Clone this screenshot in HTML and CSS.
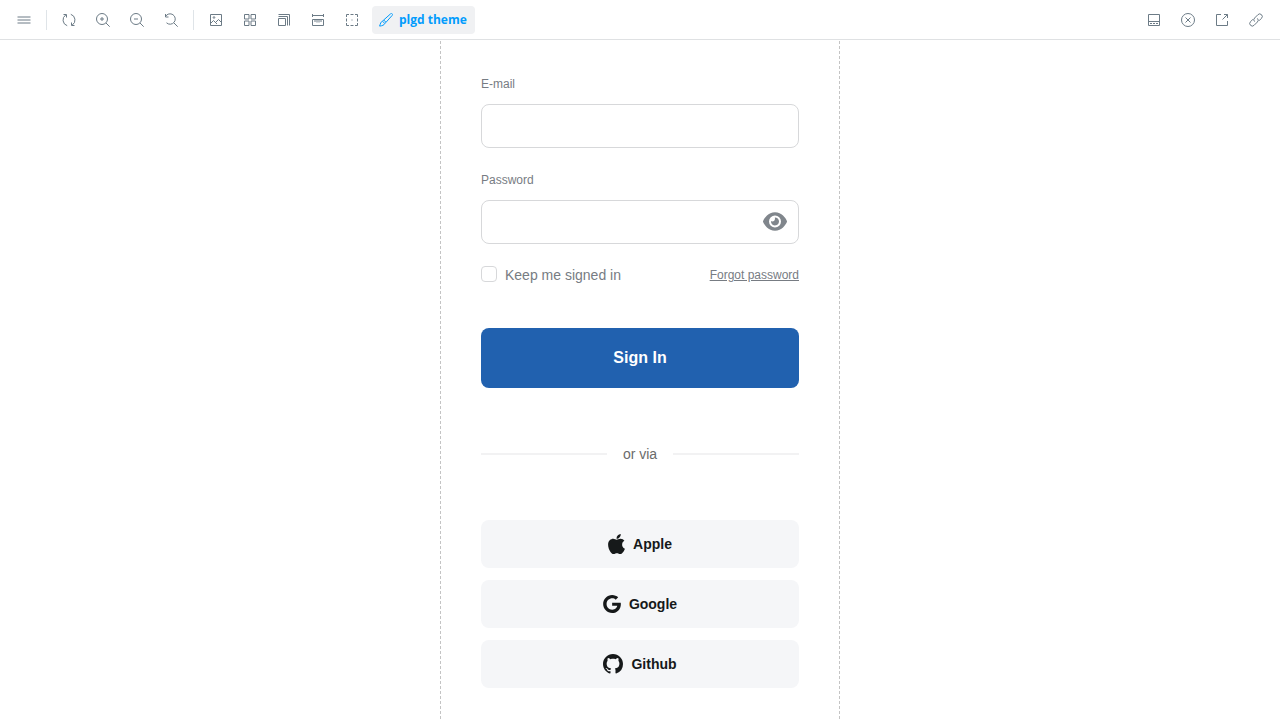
FILE: index.html
```html
<!DOCTYPE html>
<html lang="en">
<head>
<meta charset="utf-8">
<title>Sign In</title>
<link rel="stylesheet" href="styles.css">
</head>
<body>
<header class="toolbar">
  <div class="tools">
    <button class="tool" type="button" aria-label="Menu"><svg viewBox="0 0 14 14"><path d="M.5 4h13M.5 7h13M.5 10h13"/></svg></button>
    <span class="separator"></span>
    <button class="tool" type="button" aria-label="Remount"><svg viewBox="0 0 14 14"><path d="M5.200 12.700A6 6 0 0 1 3.700 2M1.500 1.500h3v3M8.800 1.300A6 6 0 0 1 10.300 12M12.500 12.500h-3v-3"/></svg></button>
    <button class="tool" type="button" aria-label="Zoom in"><svg viewBox="0 0 14 14"><circle cx="6" cy="6" r="5.5"/><path d="M6 4v4M4 6h4M10 10l3.700 3.700"/></svg></button>
    <button class="tool" type="button" aria-label="Zoom out"><svg viewBox="0 0 14 14"><circle cx="6" cy="6" r="5.5"/><path d="M4 6h4M10 10l3.700 3.700"/></svg></button>
    <button class="tool" type="button" aria-label="Reset zoom"><svg viewBox="0 0 14 14"><path d="M1.500 3.500A5.200 5.200 0 1 1 2.500 9.800M1.500 1v3h3M10 10l3.700 3.700"/></svg></button>
    <span class="separator"></span>
    <button class="tool" type="button" aria-label="Background"><svg viewBox="0 0 14 14"><path d="M1.500 1.500h11v11h-11zM1.500 10.500l3-3 2 2 3-3 3 3M6 9l2 2"/><circle cx="5" cy="4.500" r=".8"/></svg></button>
    <button class="tool" type="button" aria-label="Grid"><svg viewBox="0 0 14 14"><path d="M1.500 1.500H6V6H1.500zM8 1.500h4.500V6H8zM1.500 8H6v4.500H1.500zM8 8h4.500v4.500H8z"/></svg></button>
    <button class="tool" type="button" aria-label="Viewport"><svg viewBox="0 0 14 14"><path d="M1.500 5.500h7v7h-7zM1.500 3.500h9v9M1.500 1.500h11v11"/></svg></button>
    <button class="tool" type="button" aria-label="Measure"><svg viewBox="0 0 14 14"><path d="M1.500 1v3M12.500 1v3M1.500 2.500h11M1.500 6.500h11v6h-11zM4 7v2M6 7v2.500M8 7v2.500M10 7v2"/></svg></button>
    <button class="tool" type="button" aria-label="Outline"><svg viewBox="0 0 14 14"><path d="M1.500 4V1.500H4M10 1.500h2.500V4M12.500 10v2.500H10M4 12.500H1.500V10M5.500 1.500h3M5.500 12.500h3M1.500 5.500v3M12.500 5.500v3M6.500 7h1"/></svg></button>
    <button class="tool theme" type="button"><svg viewBox="0 0 14 14"><path d="M13.200.8c.6.6.3 1.200-.2 1.800L7 9.300 4.700 7 11.400 1c.6-.5 1.200-.8 1.800-.2zM4.700 7 3.500 8.200l2.300 2.300L7 9.300M3.500 8.200c-1.600.4-2.100 2.500-2.900 4.900 2.600-.3 4.600-1 5.200-2.600"/></svg>plgd theme</button>
  </div>
  <div class="tools">
    <button class="tool" type="button" aria-label="Show addons"><svg viewBox="0 0 14 14"><path d="M1.500 1.500h11v11h-11zM1.500 8.500h11M3 10.500h2M6 10.500h2M9 10.500h2"/></svg></button>
    <button class="tool" type="button" aria-label="Exit full screen"><svg viewBox="0 0 14 14"><circle cx="7" cy="7" r="6.500"/><path d="M4.500 4.500l5 5M9.500 4.500l-5 5"/></svg></button>
    <button class="tool" type="button" aria-label="Open in new tab"><svg viewBox="0 0 14 14"><path d="M6 1.500H1.500v11h11V8M9 1.500h3.500V5M12.500 1.500 7.500 6.500"/></svg></button>
    <button class="tool" type="button" aria-label="Copy link"><svg viewBox="0 0 14 14"><path d="M5.600 8.600a2.500 2.500 0 0 1 0-3.600l3.300-3.300a2.500 2.500 0 0 1 3.600 3.600L10 7.800M8.400 5.400a2.500 2.500 0 0 1 0 3.600l-3.300 3.300a2.500 2.500 0 0 1-3.600-3.600L4 6.200"/></svg></button>
  </div>
</header>
<main class="canvas">
  <form class="panel">
    <label class="label" for="email">E-mail</label>
    <input class="field" id="email" type="email">
    <label class="label" for="password">Password</label>
    <div class="password">
      <input class="field" id="password" type="password">
      <button class="reveal" type="button" aria-label="Show password"><svg viewBox="0 32 576 448"><path d="M288 32c-80.800 0-145.500 36.800-192.600 80.600C48.600 156 17.300 208 2.500 243.700c-3.300 7.900-3.300 16.700 0 24.600C17.300 304 48.600 356 95.400 399.400C142.500 443.200 207.200 480 288 480s145.500-36.800 192.600-80.600c46.800-43.500 78.100-95.400 93-131.100c3.300-7.900 3.300-16.700 0-24.600c-14.900-35.700-46.200-87.700-93-131.100C433.500 68.800 368.800 32 288 32zM144 256a144 144 0 1 1 288 0 144 144 0 1 1 -288 0zm144-64c0 35.300-28.700 64-64 64c-7.100 0-13.900-1.200-20.300-3.300c-5.500-1.800-11.900 1.600-11.700 7.400c.3 6.900 1.300 13.800 3.200 20.700c13.700 51.200 66.400 81.600 117.600 67.900s81.600-66.400 67.900-117.600c-11.100-41.500-47.800-69.400-88.600-71.100c-5.800-.2-9.200 6.100-7.400 11.700c2.100 6.400 3.300 13.200 3.300 20.300z"/></svg></button>
    </div>
    <div class="options">
      <input class="check" id="keep" type="checkbox">
      <label class="keep" for="keep">Keep me signed in</label>
      <a class="forgot" href="#">Forgot password</a>
    </div>
    <button class="submit" type="submit">Sign In</button>
    <div class="divider">or via</div>
    <div class="providers">
      <button class="provider" type="button"><svg width="17" height="20" viewBox="4 32 376 448"><path d="M318.700 268.700c-.2-36.700 16.400-64.400 50-84.800-18.800-26.900-47.200-41.700-84.700-44.600-35.500-2.800-74.300 20.700-88.500 20.700-15 0-49.400-19.700-76.400-19.700C63.300 141.200 4 184.800 4 273.500q0 39.300 14.400 81.200c12.800 36.700 59 126.700 107.200 125.200 25.200-.6 43-17.900 75.800-17.900 31.800 0 48.300 17.900 76.400 17.900 48.600-.7 90.400-82.500 102.600-119.300-65.200-30.700-61.700-90-61.700-91.900zm-56.600-164.200c27.300-32.400 24.800-61.900 24-72.500-24.100 1.400-52 16.400-67.900 34.900-17.500 19.800-27.800 44.300-25.600 71.900 26.100 2 49.900-11.400 69.500-34.300z"/></svg>Apple</button>
      <button class="provider" type="button"><svg width="18" height="18" viewBox="0 8 488 496"><path d="M488 261.800C488 403.300 391.100 504 248 504 110.800 504 0 393.200 0 256S110.800 8 248 8c66.800 0 123 24.500 166.300 64.900l-67.500 64.900C258.500 52.600 94.300 116.600 94.300 256c0 86.500 69.100 156.600 153.700 156.600 98.200 0 135-70.400 140.800-106.900H248v-85.300h236.100c2.300 12.700 3.900 24.900 3.900 41.400z"/></svg>Google</button>
      <button class="provider" type="button"><svg width="20" height="20" viewBox="0 0 16 16"><path d="M8 0C3.580 0 0 3.580 0 8c0 3.540 2.290 6.530 5.470 7.590.4.070.55-.17.55-.38 0-.19-.01-.82-.01-1.490-2.010.37-2.530-.49-2.690-.94-.09-.23-.48-.94-.82-1.130-.28-.15-.68-.52-.01-.53.63-.01 1.080.58 1.230.82.72 1.210 1.870.87 2.330.66.07-.52.28-.87.51-1.070-1.780-.2-3.640-.89-3.640-3.950 0-.87.31-1.590.82-2.150-.08-.2-.36-1.020.08-2.120 0 0 .67-.21 2.200.82.64-.18 1.320-.27 2-.27s1.360.09 2 .27c1.530-1.040 2.200-.82 2.200-.82.44 1.100.16 1.920.08 2.120.51.56.82 1.270.82 2.150 0 3.070-1.870 3.750-3.650 3.950.29.25.54.73.54 1.480 0 1.070-.01 1.930-.01 2.200 0 .21.15.46.55.38A8.010 8.010 0 0 0 16 8c0-4.420-3.580-8-8-8z"/></svg>Github</button>
    </div>
  </form>
</main>
</body>
</html>
```
FILE: styles.css
```css
* { box-sizing: border-box; }
body {
  margin: 0;
  min-height: 100vh;
  display: flex;
  flex-direction: column;
  background: #fff;
  font-family: "Liberation Sans", Arial, sans-serif;
}
button { border: 0; margin: 0; font-family: inherit; cursor: pointer; }
svg { display: block; flex: none; }

.toolbar {
  display: flex;
  justify-content: space-between;
  padding: 6px 10px 5px;
  border-bottom: 1px solid #dfe1e3;
}
.tools { display: flex; align-items: center; gap: 6px; }
.tool {
  display: flex;
  align-items: center;
  justify-content: center;
  width: 28px;
  height: 28px;
  padding: 0;
  border-radius: 4px;
  background: none;
  color: #6c7b86;
}
.tool svg { width: 14px; height: 14px; fill: none; stroke: currentColor; }
.tool.theme {
  width: auto;
  padding: 0 8px 0 7px;
  gap: 6px;
  background: #f0f1f3;
  color: #029cfd;
  font: 700 12px/16px "Open Sans", sans-serif;
}
.separator { width: 1px; height: 20px; margin: 0 2px; background: #dfe4e8; }

.canvas { flex: 1; display: flex; justify-content: center; padding: 1px 0; }
.panel {
  width: 100%;
  max-width: 400px;
  padding: 35px 40px 31px;
  border: dashed #c4c4c4;
  border-width: 0 1px;
}
.label {
  display: block;
  margin-bottom: 12px;
  font-size: 12px;
  line-height: 16px;
  color: #777c83;
}
.field {
  display: block;
  width: 100%;
  height: 44px;
  margin-bottom: 24px;
  padding: 0 12px;
  border: 1px solid #d7d8da;
  border-radius: 8px;
  background: #fff;
  font-size: 14px;
}
.password { position: relative; margin-bottom: 22px; }
.password .field { margin-bottom: 0; }
.reveal {
  position: absolute;
  top: 0;
  right: 12px;
  height: 43px;
  padding: 0;
  background: none;
}
.reveal svg { width: 24px; height: 19px; fill: #80868c; }
.options { display: flex; align-items: center; height: 16px; margin-bottom: 46px; }
.check {
  appearance: none;
  align-self: flex-start;
  width: 16px;
  height: 16px;
  margin: 0 8px 0 0;
  border: 1px solid #d7d8da;
  border-radius: 4px;
  background: #fff;
}
.keep { flex: 1; padding-top: 2px; font-size: 14px; line-height: 18px; color: #777c83; }
.forgot { padding-top: 2px; font-size: 12px; line-height: 16px; color: #777c83; }
.submit {
  display: block;
  width: 100%;
  height: 60px;
  border-radius: 8px;
  background: #2161af;
  color: #fff;
  font-size: 16px;
  font-weight: 700;
}
.divider {
  display: flex;
  align-items: center;
  gap: 16px;
  margin: 56px 0;
  font-size: 14px;
  line-height: 20px;
  color: #6b6b6b;
}
.divider::before, .divider::after { content: ""; flex: 1; height: 2px; background: #f2f2f3; }
.providers { display: flex; flex-direction: column; gap: 12px; }
.provider {
  display: flex;
  align-items: center;
  justify-content: center;
  gap: 8px;
  height: 48px;
  padding: 0;
  border-radius: 8px;
  background: #f5f6f8;
  color: #16191a;
  font-size: 14px;
  font-weight: 700;
}
.provider svg { fill: currentColor; }
```
